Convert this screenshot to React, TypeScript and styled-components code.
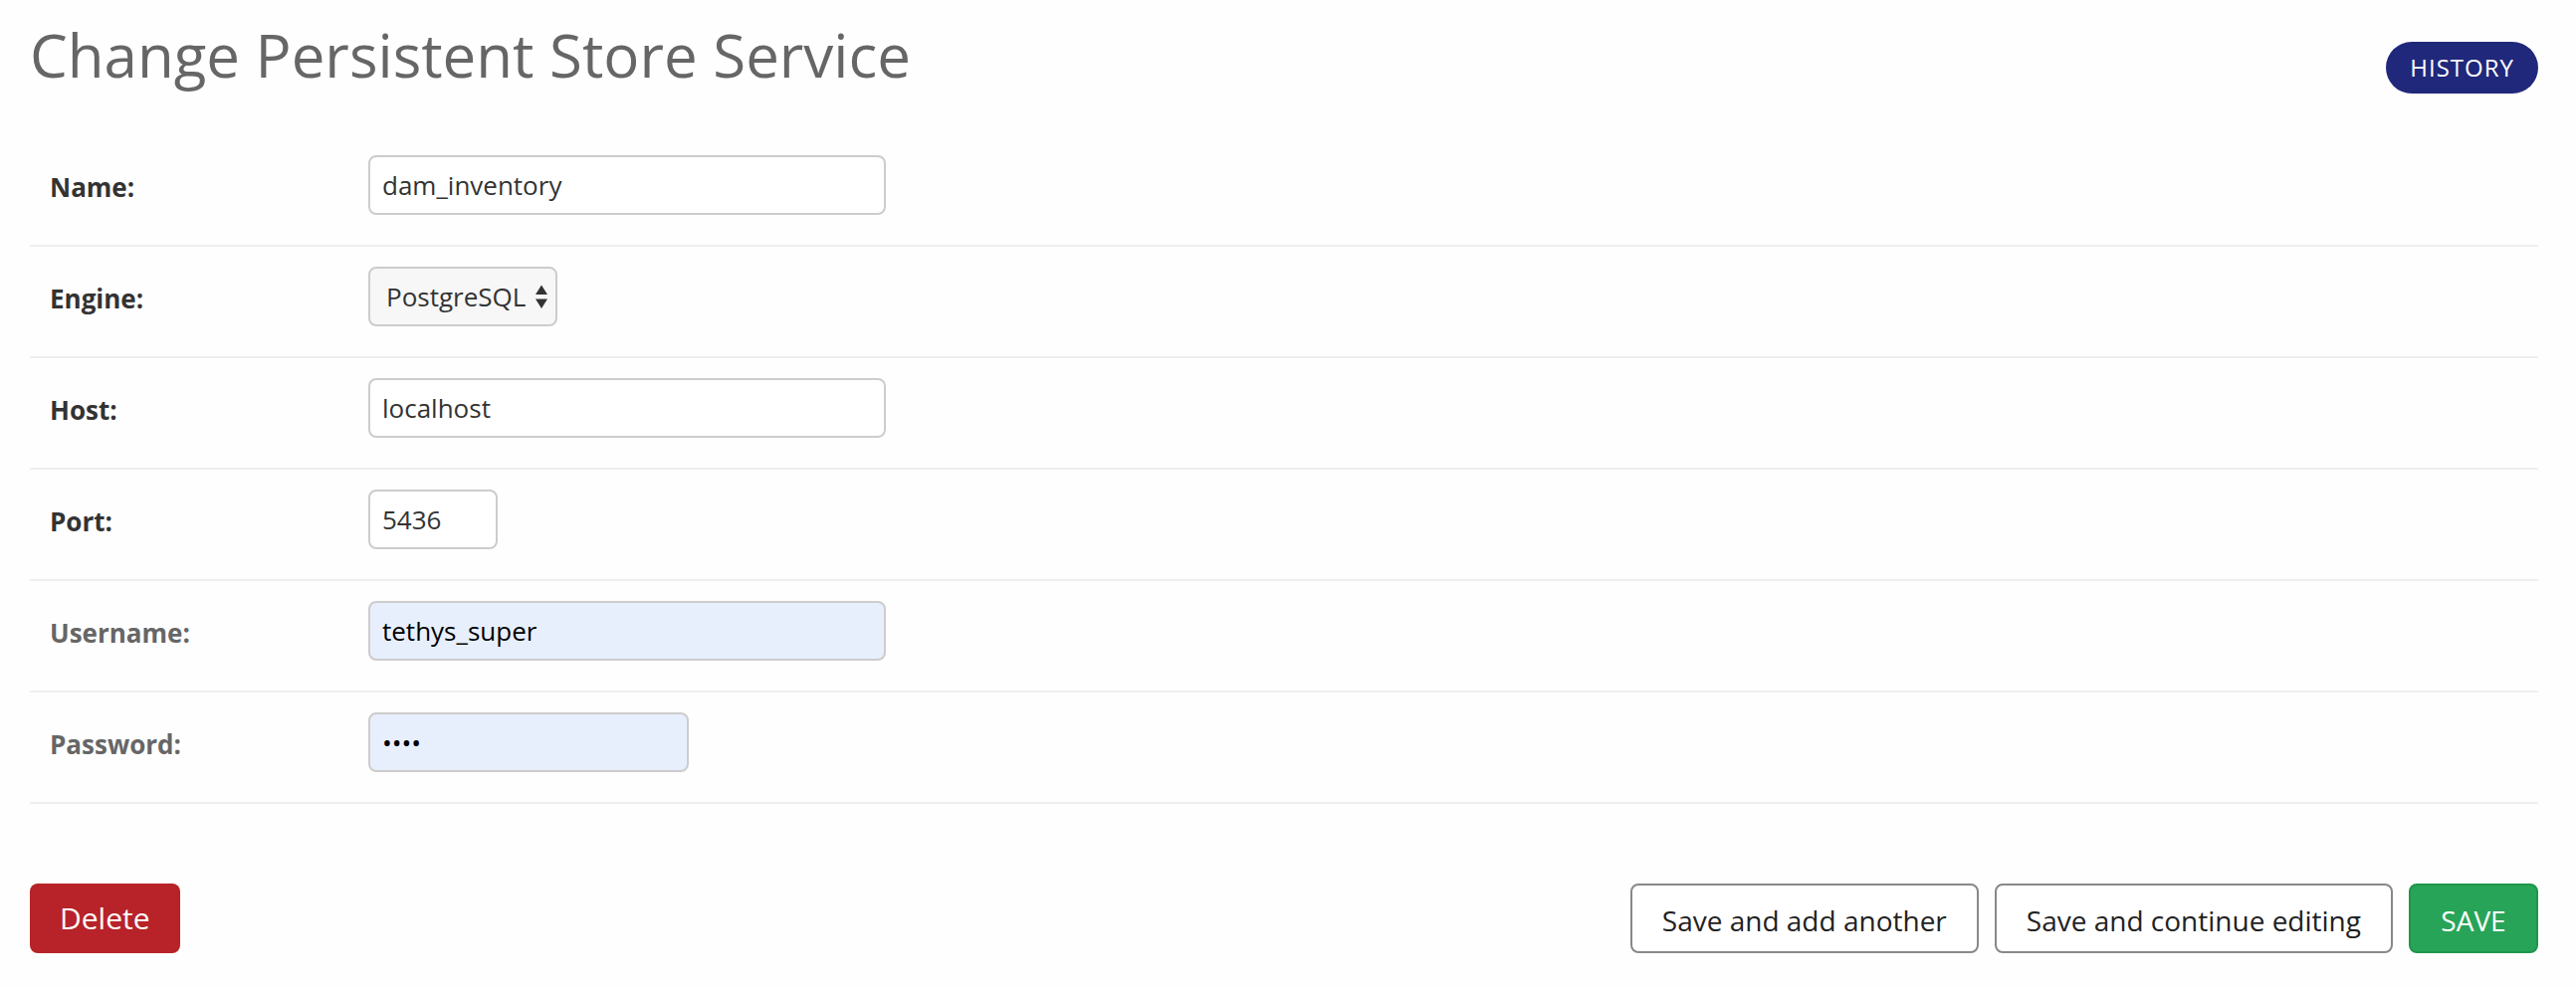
import React from 'react';
import styled, { createGlobalStyle, css } from 'styled-components';

const GlobalStyle = createGlobalStyle`
  *, *::before, *::after { box-sizing: border-box; }
  body {
    margin: 0;
    background: #fefefe;
    color: #333;
    font-family: "Open Sans", "Noto Sans", sans-serif;
    font-size: 26px;
  }
  button, input, select { font-family: inherit; margin: 0; }
`;

const Page = styled.main`
  padding: 18px 38px 34px 30px;
`;

const Header = styled.header`
  display: flex;
  justify-content: space-between;
  align-items: flex-start;
  min-height: 118px;
`;

const Title = styled.h1`
  margin: 0;
  font-size: 60px;
  line-height: 74px;
  font-weight: 400;
  color: #666;
`;

const HistoryLink = styled.a`
  margin-top: 24px;
  padding: 0 24px;
  border-radius: 26px;
  background: #20287b;
  color: #fefefe;
  font-size: 24px;
  line-height: 52px;
  letter-spacing: 1px;
  text-decoration: none;
  text-transform: uppercase;
`;

const Row = styled.div`
  display: flex;
  align-items: flex-start;
  padding: 20px 20px 30px;
  border-bottom: 2px solid #eee;
`;

const Label = styled.label<{ $optional?: boolean }>`
  flex: 0 0 320px;
  padding-top: 14px;
  font-weight: 700;
  line-height: 36px;
  color: ${(p) => (p.$optional ? '#666' : '#333')};
`;

const controlStyle = css`
  height: 60px;
  border: 2px solid #ccc;
  border-radius: 8px;
  font-size: 26px;
`;

const TextInput = styled.input<{ $width: number; $autofilled?: boolean }>`
  ${controlStyle}
  width: ${(p) => p.$width}px;
  padding: 0 12px;
  background: ${(p) => (p.$autofilled ? '#e8effc' : '#fff')};
  color: ${(p) => (p.$autofilled ? '#000' : '#333')};
`;

const SelectBox = styled.div`
  position: relative;
`;

const Select = styled.select`
  ${controlStyle}
  display: block;
  appearance: none;
  width: 190px;
  padding: 0 0 0 16px;
  background: #f7f7f7;
  color: #333;
`;

const SelectArrows = styled.svg`
  position: absolute;
  right: 10px;
  top: 18px;
  pointer-events: none;
`;

const Actions = styled.footer`
  display: flex;
  justify-content: space-between;
  align-items: flex-start;
  margin-top: 80px;
`;

const SaveGroup = styled.div`
  display: flex;
  gap: 16px;
`;

const Button = styled.button`
  height: 70px;
  padding: 4px 30px 0;
  border: 2px solid #888;
  border-radius: 8px;
  background: #fff;
  color: #222;
  font-size: 28px;
  line-height: 38px;
`;

const SaveButton = styled(Button)`
  min-width: 130px;
  border-color: #1e9649;
  background: #28a459;
  color: #fefefe;
`;

const DeleteLink = styled.a`
  padding: 0 30px;
  border-radius: 8px;
  background: #b72328;
  color: #fefefe;
  font-size: 30px;
  line-height: 70px;
  text-decoration: none;
`;

export default function App() {
  return (
    <>
      <GlobalStyle />
      <Page>
        <Header>
          <Title>Change Persistent Store Service</Title>
          <HistoryLink href="#history">History</HistoryLink>
        </Header>
        <form onSubmit={(e) => e.preventDefault()}>
          <Row>
            <Label htmlFor="name">Name:</Label>
            <TextInput id="name" type="text" $width={520} defaultValue="dam_inventory" />
          </Row>
          <Row>
            <Label htmlFor="engine">Engine:</Label>
            <SelectBox>
              <Select id="engine" defaultValue="postgresql">
                <option value="postgresql">PostgreSQL</option>
              </Select>
              <SelectArrows width="12" height="24" viewBox="0 0 12 24" fill="#333" aria-hidden="true">
                <path d="M6 0.5L12 10H0zM0 14.5H12L6 24z" />
              </SelectArrows>
            </SelectBox>
          </Row>
          <Row>
            <Label htmlFor="host">Host:</Label>
            <TextInput id="host" type="text" $width={520} defaultValue="localhost" />
          </Row>
          <Row>
            <Label htmlFor="port">Port:</Label>
            <TextInput id="port" type="text" $width={130} defaultValue="5436" />
          </Row>
          <Row>
            <Label htmlFor="username" $optional>Username:</Label>
            <TextInput id="username" type="text" $width={520} $autofilled defaultValue="tethys_super" />
          </Row>
          <Row>
            <Label htmlFor="password" $optional>Password:</Label>
            <TextInput id="password" type="password" $width={322} $autofilled defaultValue="pass" />
          </Row>
          <Actions>
            <DeleteLink href="#delete">Delete</DeleteLink>
            <SaveGroup>
              <Button type="submit">Save and add another</Button>
              <Button type="submit">Save and continue editing</Button>
              <SaveButton type="submit">SAVE</SaveButton>
            </SaveGroup>
          </Actions>
        </form>
      </Page>
    </>
  );
}
